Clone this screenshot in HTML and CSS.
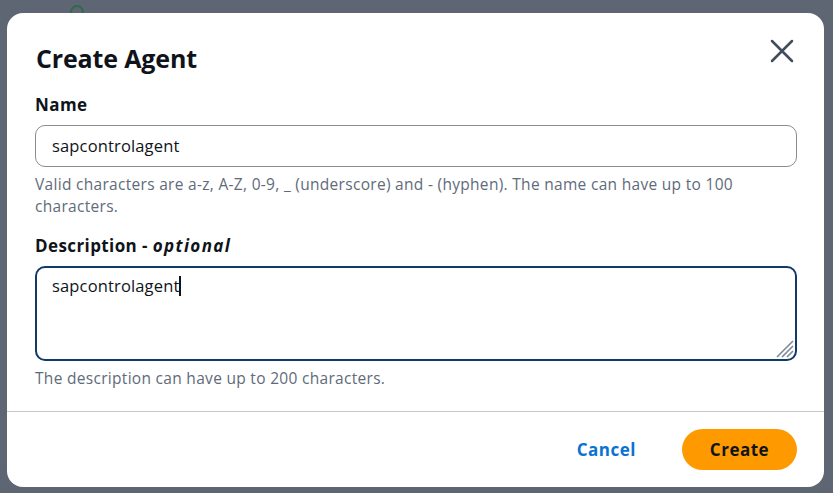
FILE: index.html
```html
<!DOCTYPE html>
<html lang="en">
<head>
  <meta charset="UTF-8">
  <title>Create Agent</title>
  <link rel="stylesheet" href="styles.css">
</head>
<body>
  <!-- page behind the overlay -->
  <div class="backdrop-hint">
    <span class="hint-dot"></span>
  </div>

  <div class="modal">
    <div class="modal-header">
      <h2>Create Agent</h2>
      <button class="close-btn" aria-label="Close">
        <svg width="24" height="24" viewBox="0 0 24 24">
          <path d="M2 2 L22 22 M22 2 L2 22" stroke="#414d5c" stroke-width="2.5" stroke-linecap="round" fill="none"/>
        </svg>
      </button>
    </div>

    <div class="modal-body">
      <div class="field">
        <label class="field-label">Name</label>
        <div class="text-input">sapcontrolagent</div>
        <p class="hint">Valid characters are a-z, A-Z, 0-9, _ (underscore) and - (hyphen). The name can have up to 100 characters.</p>
      </div>

      <div class="field">
        <label class="field-label">Description - <em>optional</em></label>
        <div class="text-area">
          <span>sapcontrolagent</span><span class="caret"></span>
          <svg class="grip" width="22" height="22" viewBox="0 0 22 22">
            <path d="M21 5 L5 21 M21 10 L10 21 M21 15 L15 21" stroke="#7d8998" stroke-width="1.6" fill="none"/>
          </svg>
        </div>
        <p class="hint">The description can have up to 200 characters.</p>
      </div>
    </div>

    <div class="modal-footer">
      <button class="link-btn">Cancel</button>
      <button class="primary-btn">Create</button>
    </div>
  </div>
</body>
</html>
```

FILE: styles.css
```css
body {
  margin: 0;
  height: 493px;
  background: #5f6673;
  font-family: "Open Sans", "Noto Sans", sans-serif;
  color: #0f141a;
  padding: 13px 9px 0 7px;
  box-sizing: border-box;
  position: relative;
  overflow: hidden;
}

/* faint content of the page under the overlay */
.backdrop-hint {
  position: absolute;
  top: 0;
  left: 70px;
}

.hint-dot {
  display: block;
  width: 14px;
  height: 14px;
  margin-top: 5px;
  border: 2px solid #2f6b4a;
  border-radius: 50%;
  box-sizing: border-box;
}

.modal {
  position: relative;
  background: #fff;
  border-radius: 16px;
  height: 474px;
  display: flex;
  flex-direction: column;
}

.modal-header {
  display: flex;
  justify-content: space-between;
  align-items: flex-start;
  padding: 28px 30px 0 29px;
}

.modal-header h2 {
  margin: 0;
  font-size: 25px;
  line-height: 34px;
  font-weight: 700;
  letter-spacing: -0.15px;
}

.close-btn {
  border: none;
  background: none;
  padding: 0;
  margin-top: -2px;
  width: 24px;
  height: 24px;
  cursor: pointer;
}

.modal-body {
  padding: 19px 27px 0 28px;
  flex: 1;
}

.field {
  margin-bottom: 18px;
}

.field-label {
  display: block;
  font-size: 17px;
  font-weight: 700;
  line-height: 22px;
  letter-spacing: 0.4px;
  margin-bottom: 9px;
}

.field-label em {
  font-style: italic;
  letter-spacing: 1.4px;
}

.text-input {
  height: 42px;
  box-sizing: border-box;
  border: 1px solid #8c8c94;
  border-radius: 10px;
  padding: 0 16px;
  font-size: 16.5px;
  letter-spacing: 0.15px;
  line-height: 40px;
}

.hint {
  margin: 6px 0 0;
  font-size: 15.5px;
  letter-spacing: 0.3px;
  line-height: 22px;
  color: #5f6b7a;
}

.text-area {
  position: relative;
  height: 95px;
  box-sizing: border-box;
  border: 2px solid #0f3b66;
  border-radius: 10px;
  padding: 6px 15px;
  font-size: 16.5px;
  letter-spacing: 0.15px;
  line-height: 24px;
}

.caret {
  display: inline-block;
  width: 1.5px;
  height: 20px;
  background: #0f141a;
  vertical-align: -4px;
}

.grip {
  position: absolute;
  right: 1px;
  bottom: 1px;
}

.modal-footer {
  border-top: 1px solid #c6c6cd;
  height: 76px;
  box-sizing: border-box;
  display: flex;
  align-items: center;
  justify-content: flex-end;
  gap: 46px;
  padding: 0 27px 0 0;
}

.link-btn {
  border: none;
  background: none;
  padding: 0;
  font-family: inherit;
  font-size: 17px;
  font-weight: 700;
  letter-spacing: 0.5px;
  color: #0972d3;
  cursor: pointer;
}

.primary-btn {
  border: none;
  background: #ff9900;
  color: #0f141a;
  font-family: inherit;
  font-size: 17px;
  font-weight: 700;
  letter-spacing: 0.5px;
  width: 115px;
  height: 41px;
  border-radius: 21px;
  cursor: pointer;
}
```
